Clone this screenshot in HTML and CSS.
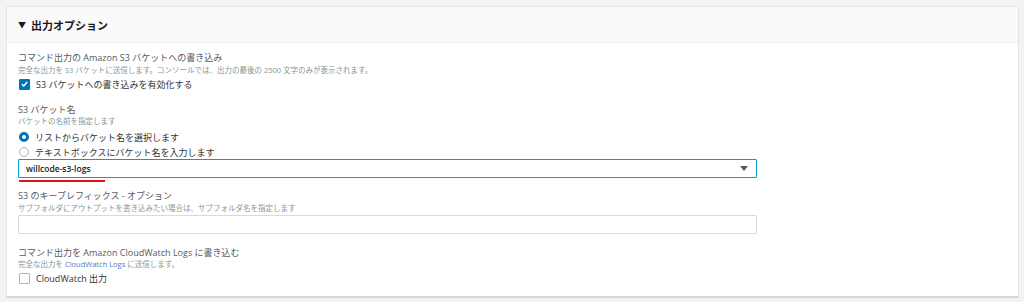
FILE: index.html
```html
<!DOCTYPE html>
<html lang="ja">
<head>
  <meta charset="UTF-8" />
  <meta name="viewport" content="width=device-width, initial-scale=1.0"/>
  <title>出力オプション</title>
  <link rel="stylesheet" href="styles.css">
</head>
<body>

  <div class="panel">
    <div class="panel-header">
      <span class="caret">▼</span>出力オプション
    </div>

    <div class="panel-body">
      <!-- S3 出力 -->
      <div class="field first">
        <div class="label">コマンド出力の Amazon S3 バケットへの書き込み</div>
        <div class="desc">完全な出力を S3 バケットに送信します。コンソールでは、出力の最後の 2500 文字のみが表示されます。</div>
        <label class="check-row">
          <span class="checkbox checked">
            <svg viewBox="0 0 10 10" width="10" height="10"><path d="M2 5.2 L4.2 7.3 L8 2.8" fill="none" stroke="#fff" stroke-width="1.6"/></svg>
          </span>
          S3 バケットへの書き込みを有効化する
        </label>
      </div>

      <!-- バケット名 -->
      <div class="field bucket">
        <div class="label">S3 バケット名</div>
        <div class="desc">バケットの名前を指定します</div>
        <label class="radio-row first-radio"><span class="radio selected"></span>リストからバケット名を選択します</label>
        <label class="radio-row"><span class="radio"></span>テキストボックスにバケット名を入力します</label>
        <div class="select-wrap">
          <div class="select">
            <span class="select-value">willcode-s3-logs</span>
            <span class="select-arrow"></span>
          </div>
          <span class="mark"></span>
        </div>
      </div>

      <!-- プレフィックス -->
      <div class="field prefix">
        <div class="label">S3 のキープレフィックス - オプション</div>
        <div class="desc">サブフォルダにアウトプットを書き込みたい場合は、サブフォルダ名を指定します</div>
        <div class="text-input"></div>
      </div>

      <!-- CloudWatch -->
      <div class="field cloudwatch">
        <div class="label">コマンド出力を Amazon CloudWatch Logs に書き込む</div>
        <div class="desc">完全な出力を <span class="link">CloudWatch Logs</span> に送信します。</div>
        <label class="check-row">
          <span class="checkbox"></span>
          CloudWatch 出力
        </label>
      </div>
    </div>
  </div>

</body>
</html>
```

FILE: styles.css
```css
body {
  margin: 0;
  background: #f2f3f3;
  font-family: 'Open Sans', 'Noto Sans CJK JP', sans-serif;
  color: #444;
}

.panel {
  margin: 6px 5px 0 6px;
  background: #fff;
  border: 1px solid #e4e6e6;
  border-bottom: 2px solid #d5d9d9;
  height: 292px;
  box-sizing: border-box;
}

.panel-header {
  height: 36px;
  background: #fafafa;
  border-bottom: 1px solid #eaeded;
  box-sizing: border-box;
  display: flex;
  align-items: center;
  padding-left: 11px;
  font-size: 11px;
  font-weight: bold;
  color: #16191f;
}

.caret {
  font-size: 8px;
  margin-right: 5px;
}

.panel-body {
  padding: 9px 11px 0;
}

.label {
  font-size: 9px;
  line-height: 12px;
  color: #545b64;
}

.desc {
  font-size: 7.5px;
  line-height: 10px;
  color: #879596;
}

.link {
  color: #4a80c4;
}

.first .desc {
  margin-top: 1px;
}

.check-row,
.radio-row {
  display: flex;
  align-items: center;
  height: 14px;
  font-size: 9px;
  color: #333;
}

.first .check-row {
  margin-top: 2px;
}

.checkbox {
  width: 9px;
  height: 9px;
  border: 1px solid #aab7b8;
  border-radius: 1px;
  margin: 0 6px 0 1px;
  display: flex;
  align-items: center;
  justify-content: center;
  box-sizing: content-box;
}

.checkbox.checked {
  background: #0073bb;
  border-color: #0073bb;
}

.bucket {
  margin-top: 13px;
}

.first-radio {
  margin-top: 4px;
}

.radio-row + .radio-row {
  margin-top: 1px;
}

.radio {
  width: 8px;
  height: 8px;
  border: 1px solid #aab7b8;
  border-radius: 50%;
  margin: 0 6px 0 1px;
}

.radio.selected {
  width: 4px;
  height: 4px;
  border: 3px solid #0073bb;
}

.select-wrap {
  position: relative;
  width: 739px;
}

.select {
  height: 19px;
  border: 1px solid #00a1c9;
  border-radius: 1px;
  box-sizing: border-box;
  display: flex;
  align-items: center;
  justify-content: space-between;
  padding: 0 8px 0 7px;
}

.select-value {
  font-size: 8.5px;
  font-weight: 600;
  color: #16191f;
}

.select-arrow {
  width: 0;
  height: 0;
  border-left: 4px solid transparent;
  border-right: 4px solid transparent;
  border-top: 5px solid #545b64;
}

/* 注釈の赤線 */
.mark {
  position: absolute;
  left: 1px;
  top: 21px;
  width: 86px;
  height: 2px;
  background: #e0141e;
}

.prefix {
  margin-top: 12px;
}

.prefix .desc {
  margin-top: 1px;
}

.text-input {
  width: 739px;
  height: 19px;
  margin-top: 2px;
  border: 1px solid #d5dbdb;
  border-radius: 1px;
  box-sizing: border-box;
}

.cloudwatch {
  margin-top: 13px;
}

.cloudwatch .check-row {
  margin-top: 2px;
}
```
